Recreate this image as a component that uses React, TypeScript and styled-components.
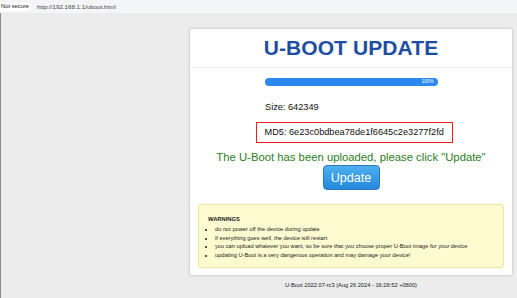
import styled, { createGlobalStyle } from 'styled-components';

const GlobalStyle = createGlobalStyle`
    html, body {
        margin: 0;
        padding: 0;
        background: #ececec;
        font-family: "Liberation Sans", Arial, sans-serif;
    }
`;

const TopBar = styled.div`
    height: 13px;
    background: #f3f5f9;
    display: flex;
    align-items: center;
    gap: 6px;
    font-size: 5.8px;
`;

const Badge = styled.span`
    background: #ffffff;
    color: #222;
    padding: 1px 2px 1px 1px;
    border-radius: 0 5px 5px 0;
    line-height: 7px;
`;

const Url = styled.span`
    color: #444;
    font-size: 6.2px;
`;

const Page = styled.main`
    height: 285px;
    border-left: 1px solid #8a8a8a;
    display: flex;
    flex-direction: column;
    align-items: flex-end;
    padding: 15px 4px 0 0;
    box-sizing: border-box;
`;

const Card = styled.section`
    width: 324px;
    background: #fff;
    border: 1px solid #d6d6d6;
    border-radius: 3px;
    box-shadow: 0 0 2px rgba(0, 0, 0, 0.12);
    box-sizing: border-box;
    padding-bottom: 7px;
`;

const Header = styled.header`
    height: 38px;
    border-bottom: 1px solid #ececec;
    display: flex;
    justify-content: center;
    align-items: center;
`;

const Title = styled.h1`
    margin: 0;
    font-size: 21px;
    font-weight: bold;
    color: #1e4ea2;
    letter-spacing: 0.1px;
`;

const Progress = styled.div`
    width: 173px;
    height: 8px;
    margin: 10px auto 0;
    border-radius: 4px;
    background: #2a88ee;
    color: #fff;
    font-size: 4.6px;
    line-height: 8px;
    text-align: right;
    padding-right: 4px;
    box-sizing: border-box;
`;

const Info = styled.div`
    padding-left: 75px;
    margin-top: 16px;
`;

const Line = styled.div`
    font-size: 9.2px;
    color: #111;
    line-height: 11px;
`;

const Md5 = styled(Line)`
    margin: 9px 0 0 -9px;
    width: 197px;
    height: 21px;
    box-sizing: border-box;
    border: 1.5px solid #ee1c1c;
    padding-left: 7.5px;
    display: flex;
    align-items: center;
`;

const Status = styled.p`
    margin: 8px 0 0;
    text-align: center;
    font-size: 11.3px;
    line-height: 13px;
    color: #2b7d25;
`;

const Button = styled.button`
    display: block;
    margin: 1px auto 0;
    width: 57px;
    height: 25px;
    border: 1px solid #2a78c0;
    border-radius: 4px;
    background: linear-gradient(#4fb0f0, #2388da);
    color: #fff;
    font-family: inherit;
    font-size: 12.5px;
    padding: 0;
`;

const Warnings = styled.div`
    margin: 14px 8px 0;
    background: #fefbd0;
    border: 1px solid #ece6a2;
    border-radius: 3px;
    padding: 10px 9px 8px;
    height: 64px;
    box-sizing: border-box;
    color: #1a1a1a;
`;

const WarnTitle = styled.div`
    font-size: 5.8px;
    font-weight: bold;
    line-height: 8px;
`;

const WarnList = styled.ul`
    margin: 2px 0 0;
    padding-left: 7px;
    font-size: 5.7px;
    line-height: 8.7px;
`;

const Footer = styled.div`
    width: 324px;
    text-align: center;
    font-size: 5.7px;
    color: #222;
    margin-top: 6px;
`;

const warnings = [
    'do not power off the device during update',
    'if everything goes well, the device will restart',
    'you can upload whatever you want, so be sure that you choose proper U-Boot image for your device',
    'updating U-Boot is a very dangerous operation and may damage your device!',
];

function App() {
    return (
        <>
            <GlobalStyle />
            <TopBar>
                <Badge>Not secure</Badge>
                <Url>http://192.168.1.1/uboot.html</Url>
            </TopBar>
            <Page>
                <Card>
                    <Header>
                        <Title>U-BOOT UPDATE</Title>
                    </Header>
                    <Progress>100%</Progress>
                    <Info>
                        <Line>Size: 642349</Line>
                        <Md5>MD5: 6e23c0bdbea78de1f6645c2e3277f2fd</Md5>
                    </Info>
                    <Status>The U-Boot has been uploaded, please click "Update"</Status>
                    <Button>Update</Button>
                    <Warnings>
                        <WarnTitle>WARNINGS</WarnTitle>
                        <WarnList>
                            {warnings.map((w) => <li key={w}>{w}</li>)}
                        </WarnList>
                    </Warnings>
                </Card>
                <Footer>U-Boot 2022.07-rc3 (Aug 26 2024 - 16:28:52 +0800)</Footer>
            </Page>
        </>
    );
}

export default App;
